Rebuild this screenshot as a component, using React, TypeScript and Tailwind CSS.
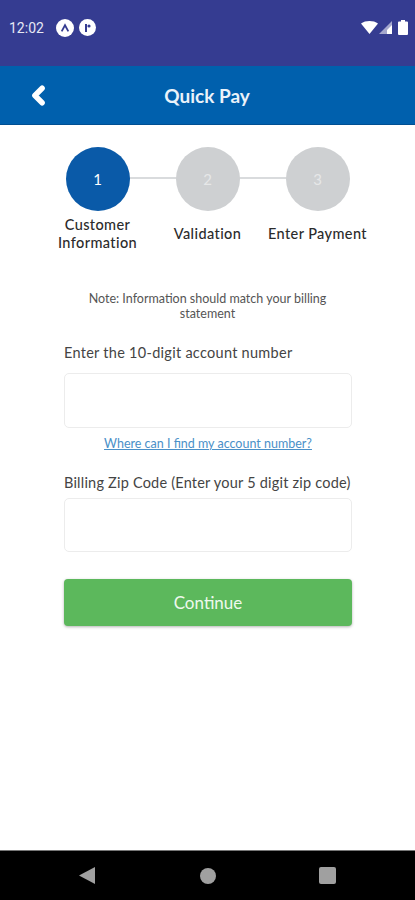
import { ChevronLeft } from "lucide-react";

const steps = [
  { n: "1", label: "Customer Information", active: true },
  { n: "2", label: "Validation", active: false },
  { n: "3", label: "Enter Payment", active: false },
];

function StatusBar() {
  return (
    <div className="h-[66px] bg-[#353c91] flex items-start justify-between pl-[9px] pr-[7px] pt-[18px] text-white">
      <div className="flex items-center h-[19px]">
        <span className="text-[14px] leading-none font-['Roboto',sans-serif] text-[#e6e8f4]">12:02</span>
        <div className="ml-[12px] w-[18px] h-[18px] rounded-full bg-white flex items-center justify-center">
          <svg width="10" height="10" viewBox="0 0 9 9" fill="none" stroke="#353c91" strokeWidth="1.6">
            <path d="M1.5 7.5 L4.5 2 L7.5 7.5" />
          </svg>
        </div>
        <div className="ml-[5px] w-[17px] h-[17px] rounded-full bg-white flex items-center justify-center">
          <svg width="9" height="10" viewBox="0 0 9 10" fill="#353c91">
            <path d="M2 1h2v8H2z" />
            <circle cx="6" cy="3" r="1.6" />
          </svg>
        </div>
      </div>
      <div className="flex items-center h-[19px] gap-[4px]">
        <svg width="17" height="13" viewBox="0 0 17 13" fill="white">
          <path d="M0 2.5 C4.5 -0.8 12.5 -0.8 17 2.5 L8.5 13 Z" />
        </svg>
        <svg width="13" height="13" viewBox="0 0 13 13" className="-ml-[3px]">
          <path d="M13 0 V13 H0 Z" fill="white" fillOpacity="0.55" />
          <path d="M13 4 V13 H8 V9 Z" fill="white" />
        </svg>
        <svg width="10" height="15" viewBox="0 0 10 15" fill="white" className="ml-[2px]">
          <path d="M3 0h4v1.5h2a1 1 0 0 1 1 1V14a1 1 0 0 1-1 1H1a1 1 0 0 1-1-1V2.5a1 1 0 0 1 1-1h2z" />
        </svg>
      </div>
    </div>
  );
}

function Stepper() {
  return (
    <div className="relative w-[330px] mx-auto pt-[22px]">
      <div className="absolute left-[55px] right-[55px] top-[52px] h-[2px] bg-[#d9dbdd]" />
      <div className="relative grid grid-cols-3">
        {steps.map((s) => (
          <div key={s.n} className="flex flex-col items-center">
            <div
              className={`w-[64px] h-[64px] rounded-full flex items-center justify-center text-[15px] ${
                s.active ? "bg-[#0a5aa8] text-white" : "bg-[#ced0d2] text-[#e6e7e8]"
              }`}
            >
              {s.n}
            </div>
            <div className="h-[46px] flex items-center justify-center text-center text-[14.5px] leading-[18px] tracking-[0.4px] font-medium text-[#2b2b2b] w-[110px]">
              {s.label}
            </div>
          </div>
        ))}
      </div>
    </div>
  );
}

export default function App() {
  return (
    <div className="w-[415px] h-[900px] flex flex-col bg-white overflow-hidden font-['Lato',sans-serif]">
      <StatusBar />
      <header className="h-[59px] bg-[#0060ad] border-b border-[#004f92] relative flex items-center justify-center">
        <ChevronLeft
          className="absolute left-[24px] top-[15px] w-[29px] h-[29px] text-white"
          strokeWidth={4.5}
        />
        <h1 className="text-[19px] font-bold text-[#eaf2fa] mt-[2px] -ml-[1px]">Quick Pay</h1>
      </header>
      <main className="flex-1">
        <Stepper />
        <p className="mt-[34px] mx-auto w-[270px] text-center text-[12.5px] leading-[15px] text-[#555]">
          Note: Information should match your billing statement
        </p>
        <form className="mt-[22px] mx-[64px] w-[288px]">
          <label className="block text-[14.5px] leading-[20px] tracking-[0.28px] text-[#444]">
            Enter the 10-digit account number
          </label>
          <div className="mt-[10px] h-[55px] rounded-[5px] border border-[#ececec] bg-white" />
          <div className="mt-[2px] text-center">
            <a className="text-[12.5px] leading-[16px] text-[#4a90c8] underline">
              Where can I find my account number?
            </a>
          </div>
          <label className="block mt-[19px] text-[14.5px] leading-[20px] tracking-[0.21px] text-[#444] whitespace-nowrap">
            Billing Zip Code (Enter your 5 digit zip code)
          </label>
          <div className="mt-[5px] h-[54px] rounded-[5px] border border-[#ececec] bg-white" />
          <button
            type="button"
            className="mt-[27px] w-full h-[47px] rounded-[4px] bg-[#5cb85c] text-[#eef8ee] text-[17px] shadow-[0_1px_3px_rgba(0,0,0,0.3)]"
          >
            Continue
          </button>
        </form>
      </main>
      <nav className="h-[50px] bg-black border-t border-[#777] flex items-center justify-between pl-[79px] pr-[79px]">
        <svg width="17" height="17" viewBox="0 0 17 17" fill="#a0a0a0">
          <path d="M16 0 V17 L0 8.5 Z" />
        </svg>
        <div className="w-[16px] h-[16px] rounded-full bg-[#a0a0a0]" />
        <div className="w-[17px] h-[17px] rounded-[2px] bg-[#a0a0a0]" />
      </nav>
    </div>
  );
}
